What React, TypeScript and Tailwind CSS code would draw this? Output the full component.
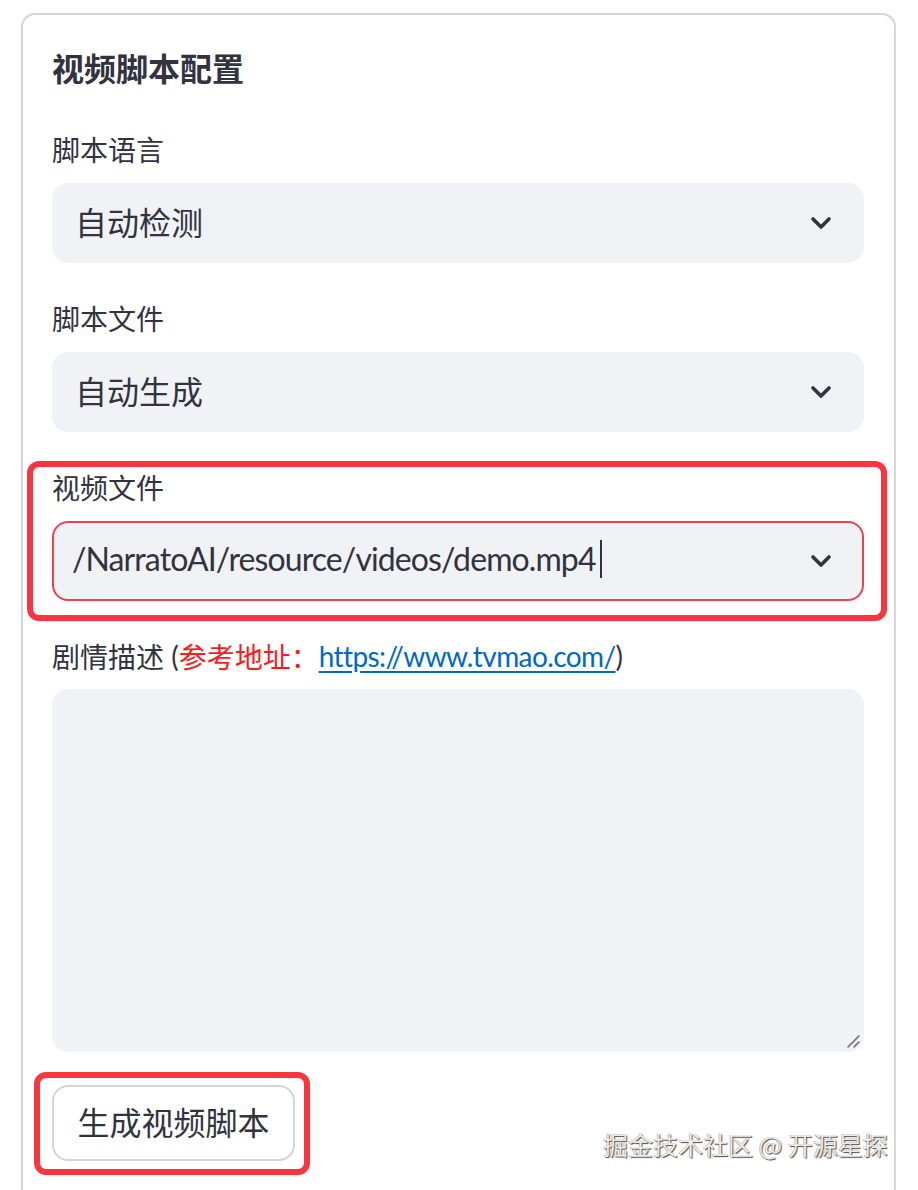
import type { ReactNode } from "react"

const font = { fontFamily: '"Noto Sans CJK SC", "Noto Sans", sans-serif' }
const latin = { fontFamily: 'Lato, "Noto Sans CJK SC", sans-serif' }

const Chevron = () => (
  <svg width="22" height="14" viewBox="0 0 22 14" className="shrink-0">
    <path
      d="M3 3 L11 11 L19 3"
      fill="none"
      stroke="#31333f"
      strokeWidth="3.6"
      strokeLinecap="round"
      strokeLinejoin="round"
    />
  </svg>
)

const Label = ({ children }: { children: ReactNode }) => (
  <div className="flex h-[40px] items-center pb-[4px] text-[28px] leading-[36px] text-[#31333f]">
    {children}
  </div>
)

const Select = ({
  value,
  focused,
  caret,
}: {
  value: string
  focused?: boolean
  caret?: boolean
}) => (
  <div
    className={
      focused
        ? "mt-[12px] flex h-[80px] items-center justify-between rounded-[16px] border-2 border-[#f0424c] bg-[#f0f2f6] pl-[18px] pr-[30px]"
        : "mt-[12px] flex h-[80px] items-center justify-between rounded-[16px] bg-[#f0f2f6] pl-[23px] pr-[32px]"
    }
  >
    <div className="flex items-center pb-[5px] text-[32px] leading-[40px] text-[#31333f]">
      <span className={caret ? "tracking-[-0.9px]" : ""}>{value}</span>
      {caret && <span className="ml-[4px] inline-block h-[38px] w-[2px] bg-[#31333f]" />}
    </div>
    <Chevron />
  </div>
)

export default function App() {
  return (
    <div className="relative h-[1190px] w-[918px] overflow-hidden bg-white" style={font}>
      <div className="ml-[21px] mt-[13px] w-[875px] rounded-[14px] border-2 border-[#d6d6d6] pb-[60px] pl-[29px] pr-[30px] pt-[32px]">
        <div className="text-[32px] font-bold leading-[40px] text-[#31333f]">视频脚本配置</div>

        <div className="mt-[44px]">
          <Label>脚本语言</Label>
          <Select value="自动检测" />
        </div>

        <div className="mt-[37px]">
          <Label>脚本文件</Label>
          <Select value="自动生成" />
        </div>

        <div className="relative mt-[37px]">
          <Label>视频文件</Label>
          <div style={latin}>
            <Select value="/NarratoAI/resource/videos/demo.mp4" focused caret />
          </div>
          <div className="pointer-events-none absolute -bottom-[20px] -left-[25px] -right-[23px] -top-[8px] rounded-[12px] border-[6px] border-[#fb3540]" />
        </div>

        <div className="mt-[37px]">
          <Label>
            <span>剧情描述</span>
            <span style={latin}>&nbsp;(</span>
            <span className="text-[#ff1a1a]">参考地址：</span>
            <span className="text-[#0068c9] tracking-[-0.6px] underline underline-offset-[4px]" style={latin}>
              https://www.tvmao.com/
            </span>
            <span style={latin}>)</span>
          </Label>
          <div className="relative mt-[11px] h-[363px] rounded-[16px] bg-[#f0f2f6]">
            <svg
              width="16"
              height="16"
              viewBox="0 0 16 16"
              className="absolute bottom-[3px] right-[3px]"
            >
              <path d="M3 14 L14 3 M9 14 L14 9" stroke="#6b6d75" strokeWidth="1.6" strokeLinecap="round" />
            </svg>
          </div>
        </div>

        <div className="relative mt-[33px] inline-block">
          <button className="flex h-[76px] w-[243px] items-center justify-center rounded-[16px] border-2 border-[#d4d5d8] bg-white pb-[4px] text-[32px] leading-[40px] text-[#31333f]">
            生成视频脚本
          </button>
          <div className="pointer-events-none absolute -bottom-[14px] -left-[18px] -right-[15px] -top-[13px] rounded-[12px] border-[6px] border-[#fb3540]" />
        </div>
      </div>

      <div
        className="absolute left-[603px] top-[1128px] text-[25px] leading-[32px] text-[#ececec]"
        style={{ textShadow: "1px 1px 1px #4a4a4a, -0.5px -0.5px 0 #9a9a9a" }}
      >
        掘金技术社区 @ 开源星探
      </div>
    </div>
  )
}
